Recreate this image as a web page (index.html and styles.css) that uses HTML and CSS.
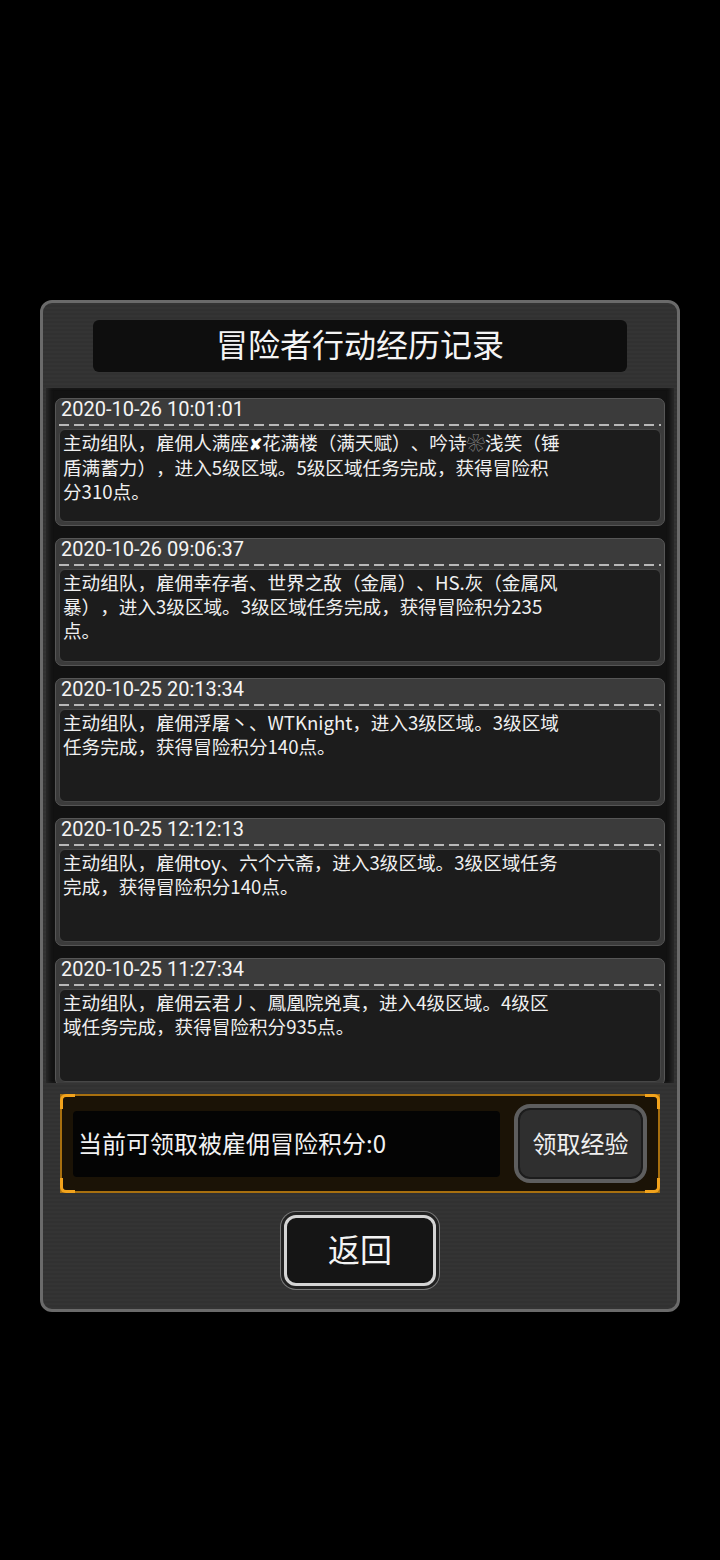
FILE: index.html
```html
<!DOCTYPE html>
<html lang="zh-CN">
<head>
    <meta charset="UTF-8">
    <meta name="viewport" content="width=device-width, initial-scale=1.0">
    <title>冒险者行动经历记录</title>
    <link rel="stylesheet" href="styles.css">
</head>
<body>
    <div class="panel">
        <!-- Title -->
        <div class="title-bar">冒险者行动经历记录</div>

        <!-- Records list -->
        <div class="list">
            <div class="card">
                <div class="card-time">2020-10-26 10:01:01</div>
                <div class="card-body">主动组队，雇佣人满座<b class="mark">✘</b>花满楼（满天赋）、吟诗<span class="flower">❀</span>浅笑（锤<br>盾满蓄力），进入5级区域。5级区域任务完成，获得冒险积<br>分310点。</div>
            </div>
            <div class="card">
                <div class="card-time">2020-10-26 09:06:37</div>
                <div class="card-body">主动组队，雇佣幸存者、世界之敌（金属）、HS.灰（金属风<br>暴），进入3级区域。3级区域任务完成，获得冒险积分235<br>点。</div>
            </div>
            <div class="card">
                <div class="card-time">2020-10-25 20:13:34</div>
                <div class="card-body">主动组队，雇佣浮屠丶、WTKnight，进入3级区域。3级区域<br>任务完成，获得冒险积分140点。</div>
            </div>
            <div class="card">
                <div class="card-time">2020-10-25 12:12:13</div>
                <div class="card-body">主动组队，雇佣toy、六个六斋，进入3级区域。3级区域任务<br>完成，获得冒险积分140点。</div>
            </div>
            <div class="card">
                <div class="card-time">2020-10-25 11:27:34</div>
                <div class="card-body">主动组队，雇佣云君丿、鳳凰院兇真，进入4级区域。4级区<br>域任务完成，获得冒险积分935点。</div>
            </div>
        </div>

        <!-- Claim section -->
        <div class="claim">
            <span class="corner tl"></span>
            <span class="corner tr"></span>
            <span class="corner bl"></span>
            <span class="corner br"></span>
            <div class="claim-info">当前可领取被雇佣冒险积分:0</div>
            <button class="claim-btn">领取经验</button>
        </div>

        <div class="back-row">
            <button class="back-btn">返回</button>
        </div>
    </div>
</body>
</html>
```

FILE: styles.css
```css
body {
    margin: 0;
    background-color: #000;
    font-family: Roboto, "Noto Sans CJK SC", sans-serif;
    color: #f2f2f2;
}

.panel {
    width: 634px;
    height: 1006px;
    margin: 300px auto 0;
    border: 3px solid #6a6a6a;
    border-radius: 12px;
    background: repeating-linear-gradient(to bottom, #343434 0, #343434 2px, #313131 2px, #313131 4px);
    display: flex;
    flex-direction: column;
    align-items: center;
    overflow: hidden;
}

.title-bar {
    width: 534px;
    height: 52px;
    margin-top: 17px;
    box-sizing: border-box;
    padding-bottom: 6px;
    background-color: #0e0e0e;
    border-radius: 6px;
    display: flex;
    justify-content: center;
    align-items: center;
    font-family: "Noto Sans CJK SC", sans-serif;
    font-size: 32px;
    color: #f4f4f4;
}

.list {
    width: 628px;
    height: 695px;
    margin-top: 16px;
    box-sizing: border-box;
    padding: 10px 9px 0;
    background-color: #121212;
    box-shadow: inset 5px 0 4px -2px #2a2a2a, inset -5px 0 4px -2px #2a2a2a;
    display: flex;
    flex-direction: column;
    gap: 12px;
    overflow: hidden;
}

.card {
    flex-shrink: 0;
    height: 128px;
    box-sizing: border-box;
    background-color: #3b3b3b;
    border: 1px solid #565656;
    border-radius: 7px;
    padding: 0 3px 3px;
    display: flex;
    flex-direction: column;
}

.card-time {
    height: 30px;
    box-sizing: border-box;
    padding: 0 0 0 2px;
    font-size: 20px;
    line-height: 21px;
    color: #f5f5f5;
    background-image: linear-gradient(to right, #b8b8b8 0, #b8b8b8 10px, transparent 10px);
    background-size: 15px 2px;
    background-repeat: repeat-x;
    background-position: 0 25px;
}

.card-body {
    flex: 1;
    background-color: #1c1c1c;
    border: 1px solid #474747;
    border-radius: 6px;
    padding: 0 0 0 3px;
    font-family: "Noto Sans CJK SC", sans-serif;
    font-size: 18.6px;
    line-height: 24px;
    text-spacing-trim: space-all;
    color: #f0f0f0;
}

.mark {
    font-size: 16px;
    color: #fff;
}

.flower {
    color: #8a8a8a;
}

.claim {
    position: relative;
    width: 600px;
    height: 99px;
    margin-top: 11px;
    box-sizing: border-box;
    border: 2px solid #a8700f;
    background-color: #1b1306;
    padding: 0 11px;
    display: flex;
    align-items: center;
    justify-content: space-between;
}

.corner {
    position: absolute;
    width: 12px;
    height: 12px;
    border: 0 solid #f2a31c;
}

.corner.tl { top: -2px; left: -2px; border-top-width: 3px; border-left-width: 3px; border-top-left-radius: 6px; }
.corner.tr { top: -2px; right: -2px; border-top-width: 3px; border-right-width: 3px; border-top-right-radius: 6px; }
.corner.bl { bottom: -2px; left: -2px; border-bottom-width: 3px; border-left-width: 3px; border-bottom-left-radius: 6px; }
.corner.br { bottom: -2px; right: -2px; border-bottom-width: 3px; border-right-width: 3px; border-bottom-right-radius: 6px; }

.claim-info {
    width: 427px;
    height: 66px;
    box-sizing: border-box;
    padding: 0 0 2px 5px;
    background-color: #040404;
    border-radius: 4px;
    display: flex;
    align-items: center;
    font-family: "Noto Sans CJK SC", sans-serif;
    font-size: 24px;
    color: #f2f2f2;
}

.claim-btn {
    width: 133px;
    height: 79px;
    box-sizing: border-box;
    background-color: #2f2f2f;
    border: 4px solid #5e5e5e;
    border-radius: 16px;
    box-shadow: inset 0 0 0 2px #1c1c1c;
    font-family: "Noto Sans CJK SC", sans-serif;
    font-size: 24px;
    color: #f0f0f0;
    padding: 0 0 2px;
}

.back-row {
    margin-top: 18px;
}

.back-btn {
    width: 152px;
    height: 71px;
    margin: 4px;
    box-sizing: border-box;
    background-color: #151515;
    border: 3px solid #d4d4d4;
    border-radius: 12px;
    box-shadow: 0 0 0 3px #222, 0 0 0 4px #7a7a7a;
    font-family: "Noto Sans CJK SC", sans-serif;
    font-size: 32px;
    color: #f4f4f4;
    padding: 0 0 5px;
}
```
